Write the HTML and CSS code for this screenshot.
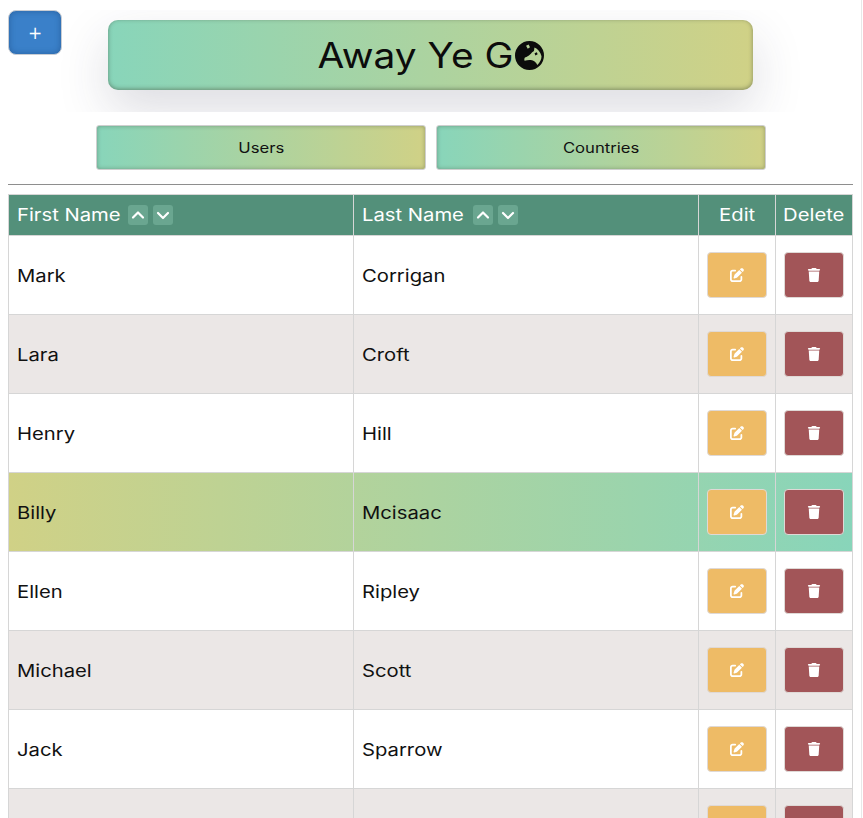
FILE: index.html
```html
<!DOCTYPE html>
<html lang="en">
<head>
<meta charset="utf-8">
<title>Away Ye Go</title>
<link rel="stylesheet" href="styles.css">
</head>
<body>
<svg class="defs" width="0" height="0" aria-hidden="true">
  <symbol id="i-edit" viewBox="0 0 512 512"><path d="M471.6 21.7c-21.9-21.9-57.3-21.9-79.2 0L362.3 51.7l97.9 97.9 30.1-30.1c21.9-21.9 21.9-57.3 0-79.2L471.6 21.7zm-299.2 220c-6.1 6.1-10.8 13.6-13.5 21.9l-29.6 88.8c-2.9 8.6-.6 18.1 5.8 24.6s15.9 8.7 24.6 5.8l88.8-29.6c8.2-2.7 15.7-7.4 21.9-13.5L437.7 172.3 339.7 74.3 172.4 241.7zM96 64C43 64 0 107 0 160V416c0 53 43 96 96 96H352c53 0 96-43 96-96V320c0-17.7-14.3-32-32-32s-32 14.3-32 32v96c0 17.7-14.3 32-32 32H96c-17.7 0-32-14.3-32-32V160c0-17.7 14.3-32 32-32h96c17.7 0 32-14.3 32-32s-14.3-32-32-32H96z"/></symbol>
  <symbol id="i-trash" viewBox="0 0 448 512"><path d="M135.2 17.7L128 32H32C14.3 32 0 46.3 0 64S14.3 96 32 96H416c17.7 0 32-14.3 32-32s-14.3-32-32-32H320l-7.2-14.3C307.4 6.8 296.3 0 284.2 0H163.8c-12.1 0-23.2 6.8-28.6 17.7zM416 128H32L53.2 467c1.6 25.3 22.6 45 47.9 45H346.9c25.3 0 46.3-19.7 47.9-45L416 128z"/></symbol>
  <symbol id="i-up" viewBox="0 0 20 20"><path d="M5 12.500 10 7.500l5 5" fill="none" stroke="currentColor" stroke-width="2.200" stroke-linecap="round" stroke-linejoin="round"/></symbol>
  <symbol id="i-down" viewBox="0 0 20 20"><path d="M5 8 10 13l5-5" fill="none" stroke="currentColor" stroke-width="2.200" stroke-linecap="round" stroke-linejoin="round"/></symbol>
</svg>

<button class="add-btn" type="button">+</button>

<header class="masthead">
  <h1 class="banner"><span class="wide-end">Away Ye G</span><svg class="globe" viewBox="0 0 512 512" aria-hidden="true"><path fill-rule="evenodd" d="M256 0A256 256 0 1 1 256 512A256 256 0 1 1 256 0ZM345 115C400 140 450 190 468 270C470 320 440 380 395 425C370 370 330 340 280 335C240 330 205 340 170 350C160 330 165 305 175 290C210 290 240 260 265 240C290 225 300 190 325 185C345 170 335 140 345 115ZM195 85L240 62L265 112L225 135ZM345 215L385 200L400 235L360 255Z"/></svg></h1>
</header>

<nav class="tabs">
  <a class="tab tab-first"><span class="wide">Users</span></a>
  <a class="tab"><span class="wide">Countries</span></a>
</nav>

<hr class="rule">

<table class="grid">
  <colgroup><col class="c-name"><col class="c-name"><col class="c-act"><col class="c-act"></colgroup>
  <thead>
    <tr>
      <th><span class="th-inner"><span class="th-label"><span class="wide-start">First Name</span></span><span class="sort"><svg><use href="#i-up"/></svg></span><span class="sort"><svg><use href="#i-down"/></svg></span></span></th>
      <th><span class="th-inner"><span class="th-label"><span class="wide-start">Last Name</span></span><span class="sort"><svg><use href="#i-up"/></svg></span><span class="sort"><svg><use href="#i-down"/></svg></span></span></th>
      <th class="th-center"><span class="wide">Edit</span></th>
      <th class="th-center"><span class="wide">Delete</span></th>
    </tr>
  </thead>
  <tbody>
    <tr><td><span class="wide-start">Mark</span></td><td><span class="wide-start">Corrigan</span></td><td class="act"><button class="btn edit" type="button"><svg><use href="#i-edit"/></svg></button></td><td class="act"><button class="btn del" type="button"><svg><use href="#i-trash"/></svg></button></td></tr>
    <tr><td><span class="wide-start">Lara</span></td><td><span class="wide-start">Croft</span></td><td class="act"><button class="btn edit" type="button"><svg><use href="#i-edit"/></svg></button></td><td class="act"><button class="btn del" type="button"><svg><use href="#i-trash"/></svg></button></td></tr>
    <tr><td><span class="wide-start">Henry</span></td><td><span class="wide-start">Hill</span></td><td class="act"><button class="btn edit" type="button"><svg><use href="#i-edit"/></svg></button></td><td class="act"><button class="btn del" type="button"><svg><use href="#i-trash"/></svg></button></td></tr>
    <tr class="hovered"><td><span class="wide-start">Billy</span></td><td><span class="wide-start">Mcisaac</span></td><td class="act"><button class="btn edit" type="button"><svg><use href="#i-edit"/></svg></button></td><td class="act"><button class="btn del" type="button"><svg><use href="#i-trash"/></svg></button></td></tr>
    <tr><td><span class="wide-start">Ellen</span></td><td><span class="wide-start">Ripley</span></td><td class="act"><button class="btn edit" type="button"><svg><use href="#i-edit"/></svg></button></td><td class="act"><button class="btn del" type="button"><svg><use href="#i-trash"/></svg></button></td></tr>
    <tr><td><span class="wide-start">Michael</span></td><td><span class="wide-start">Scott</span></td><td class="act"><button class="btn edit" type="button"><svg><use href="#i-edit"/></svg></button></td><td class="act"><button class="btn del" type="button"><svg><use href="#i-trash"/></svg></button></td></tr>
    <tr><td><span class="wide-start">Jack</span></td><td><span class="wide-start">Sparrow</span></td><td class="act"><button class="btn edit" type="button"><svg><use href="#i-edit"/></svg></button></td><td class="act"><button class="btn del" type="button"><svg><use href="#i-trash"/></svg></button></td></tr>
    <tr><td>&nbsp;</td><td>&nbsp;</td><td class="act"><button class="btn edit" type="button"><svg><use href="#i-edit"/></svg></button></td><td class="act"><button class="btn del" type="button"><svg><use href="#i-trash"/></svg></button></td></tr>
  </tbody>
</table>
</body>
</html>
```
FILE: styles.css
```css
* { box-sizing: border-box; }

html {
  width: 862px;
  height: 818px;
  overflow: hidden;
  background: #fff;
  border-right: 1px solid #e8e8e8;
}

body {
  margin: 0;
  padding: 10px 8px 0;
  width: 861px;
  position: relative;
  font-family: Inter, "DejaVu Sans", sans-serif;
  color: #111;
}

.defs { position: absolute; }

/* the reference face is an extended grotesque; no installed family is that wide */
.wide, .wide-start, .wide-end {
  display: inline-block;
  white-space: pre;
  transform: scaleX(1.19);
}
.wide-start { transform-origin: left center; }
.wide-end {
  transform: scaleX(1.11);
  transform-origin: right center;
  margin-left: 20px;
}

.add-btn {
  position: absolute;
  left: 8px;
  top: 10px;
  width: 54px;
  height: 45px;
  padding: 0;
  font-family: "DejaVu Sans", sans-serif;
  font-size: 17px;
  color: #fff;
  background: #3a80c9;
  border: 1px solid #c9cdd3;
  border-radius: 8px;
  box-shadow: inset 0 0 6px rgba(20, 60, 110, 0.45);
}

.masthead {
  height: 102px;
  padding: 10px 100px 0;
  overflow: hidden;
  background: #fff;
}

.banner {
  height: 70px;
  margin: 0;
  display: flex;
  align-items: center;
  justify-content: center;
  font-size: 35px;
  font-weight: 400;
  color: #0c0c0c;
  border-radius: 10px;
  background: linear-gradient(90deg, #88d5ba 0%, #d0d186 100%);
  box-shadow: inset 0 -1px 4px rgba(60, 70, 50, 0.5), 0 20px 50px rgba(50, 50, 80, 0.17);
}

.globe {
  width: 29px;
  height: 29px;
  margin-left: 2px;
  fill: #0c0c0c;
}

.tabs {
  display: flex;
  gap: 10px;
  padding: 13px 0 0 88px;
}

.tab {
  width: 330px;
  height: 45px;
  display: flex;
  align-items: center;
  justify-content: center;
  font-size: 14px;
  color: #111;
  border: 1px solid #cfcfcf;
  border-radius: 3px;
  background: linear-gradient(90deg, #88d5ba 0%, #d0d186 100%);
  box-shadow: inset 0 0 4px rgba(60, 70, 50, 0.4);
}

.rule {
  margin: 14px 0 9px;
  height: 1px;
  border: 0;
  background: #8e8e8e;
}

.grid {
  width: 844px;
  table-layout: fixed;
  border-collapse: collapse;
}

.c-name { width: 345px; }
.c-act { width: 77px; }

th, td {
  border: 1px solid #d6d6d6;
  padding: 0 8px;
}

thead tr { height: 41px; }

th {
  font-size: 17px;
  font-weight: 400;
  color: #fff;
  background: #53907a;
  text-align: left;
}

.th-center { text-align: center; padding: 0; }

.th-inner {
  display: flex;
  align-items: center;
  gap: 5px;
}

.th-label { width: 106px; }

.sort {
  width: 20px;
  height: 20px;
  display: block;
  color: #fff;
  background: #6aa690;
  border-radius: 3px;
}

.sort svg { display: block; width: 20px; height: 20px; }

tbody tr { height: 79px; background: #fff; }
tbody tr:nth-child(even) { background: #ebe7e6; }
tbody tr.hovered { background: linear-gradient(90deg, #d0d186 0%, #88d5ba 100%); }

td {
  padding-top: 2px;
  font-size: 17px;
  color: #111;
}

.act { text-align: center; padding: 0; }

.btn {
  width: 60px;
  height: 46px;
  padding: 0;
  display: inline-flex;
  align-items: center;
  justify-content: center;
  vertical-align: middle;
  color: #fff;
  border: 1px solid #dfd9d6;
  border-radius: 4px;
}

.btn svg { fill: currentColor; width: 14px; height: 14px; }
.edit { background: #eebb66; }
.del { background: #a25558; }
```
